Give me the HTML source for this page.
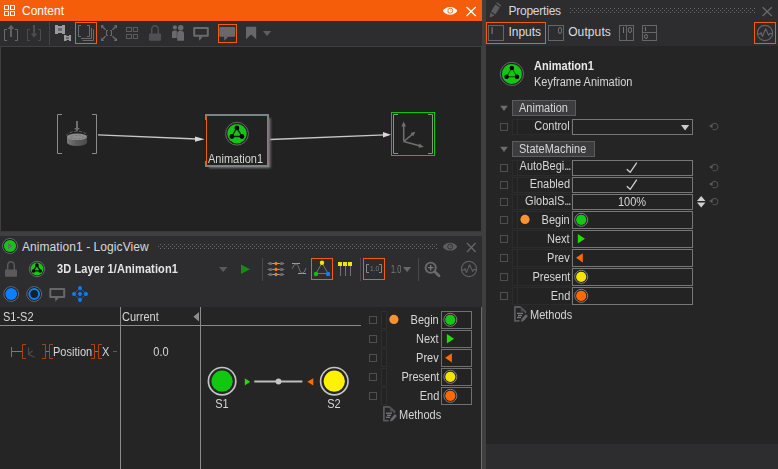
<!DOCTYPE html>
<html><head><meta charset="utf-8"><title>Animation1 - LogicView</title>
<style>
html,body{margin:0;padding:0;}
body{width:778px;height:469px;overflow:hidden;background:#3f3f40;position:relative;font-family:"Liberation Sans",sans-serif;font-size:11px;color:#d6d6d6;}
.t{position:absolute;white-space:nowrap;line-height:14px;height:14px;}
#gfx{position:absolute;left:0;top:0;width:778px;height:469px;}
</style></head><body>
<svg id="gfx" width="778" height="469" viewBox="0 0 778 469">
<rect x="0" y="0" width="778" height="469" fill="#3f3f40"/>
<rect x="0" y="0" width="482" height="21" fill="#f55d0b" />
<rect x="0" y="21" width="482" height="25" fill="#2d2d30" />
<rect x="1" y="47" width="480" height="184" fill="#222222" />
<line x1="0" y1="231.5" x2="482" y2="231.5" stroke="#39393b" stroke-width="1" />
<rect x="0" y="236" width="482" height="71" fill="#2d2d30" />
<rect x="0" y="307" width="481" height="162" fill="#252525" />
<rect x="481" y="307" width="1" height="162" fill="#6c6c6c" />
<rect x="486" y="0" width="292" height="46" fill="#2d2d30" />
<rect x="486" y="46" width="292" height="398" fill="#252525" />
<rect x="486" y="444" width="292" height="25" fill="#2d2d30" />
<rect x="4.5" y="5.5" width="4" height="4" fill="none" stroke="#ffffff" stroke-width="1" />
<rect x="10.5" y="5.5" width="4" height="4" fill="none" stroke="#ffffff" stroke-width="1" />
<rect x="4.5" y="11.5" width="4" height="4" fill="none" stroke="#ffffff" stroke-width="1" />
<rect x="10.5" y="11.5" width="4" height="4" fill="none" stroke="#ffffff" stroke-width="1" />
<path d="M442.90000000000003,10.8 C445.6,5.6000000000000005 454.6,5.6000000000000005 457.3,10.8 C454.6,16.0 445.6,16.0 442.90000000000003,10.8 Z" fill="#ffffff" />
<circle cx="450.3" cy="10.700000000000001" r="2.5" fill="none" stroke="#f55d0b" stroke-width="0.9"/>
<circle cx="450.90000000000003" cy="10.100000000000001" r="0.55" fill="#f55d0b"/>
<path d="M466.5,7 L475.8,16 M475.8,7 L466.5,16" fill="none" stroke="#ffffff" stroke-width="1.3" />
<path d="M7,29.5 L4.5,29.5 L4.5,40.5 L7,40.5" fill="none" stroke="#6a6a6e" stroke-width="1" />
<path d="M15,29.5 L17.5,29.5 L17.5,40.5 L15,40.5" fill="none" stroke="#6a6a6e" stroke-width="1" />
<rect x="10" y="27" width="2" height="10" fill="#626266" />
<path d="M7.6,29 L11,24.8 L14.4,29 Z" fill="#626266" />
<path d="M30,29.5 L27.5,29.5 L27.5,40.5 L30,40.5" fill="none" stroke="#4c4c50" stroke-width="1" />
<path d="M38,29.5 L40.5,29.5 L40.5,40.5 L38,40.5" fill="none" stroke="#4c4c50" stroke-width="1" />
<rect x="33" y="25" width="2" height="10" fill="#4c4c50" />
<path d="M30.6,33.6 L34,37.8 L37.4,33.6 Z" fill="#4c4c50" />
<line x1="49.5" y1="22" x2="49.5" y2="45" stroke="#454548" stroke-width="1" />
<rect x="55" y="25" width="10" height="9" fill="#9a9a9e" />
<rect x="58" y="25" width="4" height="1" fill="#2d2d30" />
<rect x="58" y="33" width="4" height="1" fill="#2d2d30" />
<rect x="58" y="28" width="4" height="3" fill="#68686c" />
<rect x="64" y="35" width="7" height="6" fill="#9a9a9e" />
<rect x="66.5" y="35" width="2.5" height="1" fill="#2d2d30" />
<rect x="66.5" y="40" width="2.5" height="1" fill="#2d2d30" />
<rect x="66" y="37" width="3" height="2" fill="#68686c" />
<rect x="75.5" y="22.5" width="21" height="21" fill="#2d2d30" stroke="#f55d0b" stroke-width="1" />
<path d="M81,25.5 L78.5,25.5 L78.5,36.5 L81,36.5" fill="none" stroke="#6c6c70" stroke-width="1" />
<path d="M87,25.5 L89.5,25.5 L89.5,36.5 L87,36.5" fill="none" stroke="#6c6c70" stroke-width="1" />
<path d="M91.5,28 L91.5,38.5 L81,38.5" fill="none" stroke="#6c6c70" stroke-width="1" />
<path d="M93.5,29.5 L93.5,40.5 L82.5,40.5" fill="none" stroke="#6c6c70" stroke-width="1" />
<path d="M101.5,25.8 L105.5,29.8 M116.5,25.8 L112.5,29.8 M101.5,40.3 L105.5,36.3 M116.5,40.3 L112.5,36.3" fill="none" stroke="#6c6c70" stroke-width="1.3" />
<path d="M101,25.2 L104.2,25.2 L101,28.4 Z M117,25.2 L113.8,25.2 L117,28.4 Z M101,40.9 L104.2,40.9 L101,37.7 Z M117,40.9 L113.8,40.9 L117,37.7 Z" fill="#6c6c70" />
<path d="M108,30.5 L106.5,30.5 L106.5,35.5 L108,35.5 M110,30.5 L111.5,30.5 L111.5,35.5 L110,35.5" fill="none" stroke="#6c6c70" stroke-width="1" />
<rect x="126.5" y="27.5" width="5" height="4" fill="none" stroke="#5c5c60" stroke-width="1" />
<rect x="133.5" y="27.5" width="4" height="4" fill="none" stroke="#5c5c60" stroke-width="1" />
<rect x="126.5" y="34.5" width="5" height="4" fill="none" stroke="#5c5c60" stroke-width="1" />
<rect x="133.5" y="34.5" width="4" height="4" fill="none" stroke="#5c5c60" stroke-width="1" />
<rect x="149" y="33.6" width="12" height="7.2" fill="#505054" rx="0.8"/>
<path d="M151.7,34 L151.7,29.4 A3.3,3.6 0 0 1 158.3,29.4 L158.3,34" fill="none" stroke="#505054" stroke-width="1.5" />
<circle cx="174.9" cy="27.4" r="2.1" fill="#6a6a6e"/>
<path d="M172,37.9 L172,32.4 Q172,30.4 174,30.4 L176.8,30.4 L176.8,37.9 Z" fill="#6a6a6e" />
<circle cx="180.7" cy="27.7" r="2.8" fill="#6a6a6e"/>
<path d="M177.2,40.7 L177.2,33.5 Q177.2,30.8 180.6,30.8 Q184,30.8 184,33.5 L184,40.7 Z" fill="#6a6a6e" />
<path d="M194.2,28.1 L207.8,28.1 L207.8,35.8 L194.2,35.8 Z" fill="none" stroke="#6a6a6e" stroke-width="2" stroke-linejoin="round"/>
<path d="M198.8,36.5 L203,36.5 L199.3,40.7 Z" fill="#6a6a6e" />
<rect x="218.5" y="24.5" width="18" height="18" fill="#2d2d30" stroke="#f55d0b" stroke-width="1" />
<path d="M220.3,27 L234.2,27 Q235.2,27 235.2,28 L235.2,35.8 Q235.2,36.8 234.2,36.8 L220.3,36.8 Q219.3,36.8 219.3,35.8 L219.3,28 Q219.3,27 220.3,27 Z" fill="#69696d" />
<path d="M224,36.5 L228.4,36.5 L224.4,40.7 Z" fill="#69696d" />
<path d="M246,26.7 L256.2,26.7 L256.2,39.2 L251.1,34.6 L246,39.2 Z" fill="#67676b" />
<path d="M263,31 L271.2,31 L267.1,36 Z" fill="#5e5e62" />
<path d="M62,114.5 L57.5,114.5 L57.5,153.5 L62,153.5" fill="none" stroke="#8c8c8c" stroke-width="1" />
<path d="M92,114.5 L96.5,114.5 L96.5,153.5 L92,153.5" fill="none" stroke="#8c8c8c" stroke-width="1" />
<defs><linearGradient id="cyl" x1="0" x2="1" y1="0" y2="0"><stop offset="0" stop-color="#7a7a7a"/><stop offset="0.45" stop-color="#5c5c5c"/><stop offset="1" stop-color="#4a4a4a"/></linearGradient></defs>
<path d="M67,136.8 L67,142.6 A10,3.4 0 0 0 87,142.6 L87,136.8 Z" fill="url(#cyl)" />
<ellipse cx="77" cy="136.8" rx="10" ry="3.3" fill="#8c8c8c"/>
<ellipse cx="77" cy="137.2" rx="6.6" ry="1.7" fill="none" stroke="#6e6e6e" stroke-width="0.8" stroke-dasharray="2.4 1.4"/>
<path d="M66.8,135.8 A10.2,4.5 0 0 1 87.2,135.8" fill="none" stroke="#686868" stroke-width="0.9" stroke-dasharray="3 1.6"/>
<rect x="76" y="121" width="2" height="9" fill="#6e6e6e" />
<path d="M74.2,128 L79.8,128 L77,131.4 Z" fill="#6e6e6e" />
<line x1="98" y1="134.9" x2="197" y2="139.0" stroke="#c8c8c8" stroke-width="1.4" />
<path d="M204.6,139.3 L195,136.6 L195,141.8 Z" fill="#d8d8d8" />
<line x1="270" y1="139.5" x2="385" y2="134.9" stroke="#c8c8c8" stroke-width="1.4" />
<path d="M391,134.7 L383,132.0 L383,137.6 Z" fill="#d8d8d8" />
<defs><filter id="blur" x="-20%" y="-20%" width="140%" height="140%"><feGaussianBlur stdDeviation="1.3"/></filter></defs>
<rect x="209" y="118" width="61.5" height="50" fill="#787878" filter="url(#blur)"/>
<rect x="205" y="114" width="64" height="1" fill="#7c8288" />
<rect x="205" y="166" width="64" height="1" fill="#7c8288" />
<rect x="205" y="114" width="1" height="6" fill="#7c8288" />
<rect x="205" y="161" width="1" height="6" fill="#7c8288" />
<rect x="268" y="114" width="1" height="6" fill="#7c8288" />
<rect x="268" y="161" width="1" height="6" fill="#7c8288" />
<rect x="206.5" y="115.5" width="61" height="50" fill="#222222" stroke="#f0600f" stroke-width="1" />
<circle cx="237" cy="133.7" r="11.4" fill="#1e1e1e" stroke="#68686c" stroke-width="1"/>
<circle cx="237" cy="133.7" r="9.7" fill="#14c614"/>
<path d="M236.90,127.88 L231.86,136.51 L241.95,136.51 Z" fill="#14c614" stroke="#062006" stroke-width="1.3" />
<circle cx="236.9" cy="127.88" r="2.4" fill="#030303"/>
<circle cx="231.86" cy="136.51" r="2.4" fill="#030303"/>
<circle cx="241.95" cy="136.51" r="2.4" fill="#030303"/>
<rect x="391.5" y="112.5" width="43" height="43" fill="none" stroke="#00cc00" stroke-width="1" />
<path d="M398,114.5 L393.5,114.5 L393.5,153.5 L398,153.5" fill="none" stroke="#8c8c8c" stroke-width="1" />
<path d="M428,114.5 L432.5,114.5 L432.5,153.5 L428,153.5" fill="none" stroke="#8c8c8c" stroke-width="1" />
<path d="M403.7,141.5 L403.7,124.5 M403.7,141.5 L413.2,133.6 M403.7,141.5 L420.5,146" fill="none" stroke="#707073" stroke-width="1.5" />
<path d="M403.7,121.6 L401.4,126.6 L406,126.6 Z" fill="#707073" />
<path d="M415.4,131.8 L410.6,133 L413.2,136.2 Z" fill="#707073" />
<path d="M423.8,147 L419.4,143.6 L418.4,147.8 Z" fill="#707073" />
<circle cx="10" cy="246" r="7.5" fill="#1e1e1e" stroke="#68686c" stroke-width="1"/>
<circle cx="10" cy="246" r="6.1" fill="#14c614"/>
<path d="M8,243 L12.5,246 L8,249 Z" fill="#70666f" />
<pattern id="g158_244" x="156" y="244" width="4" height="4" patternUnits="userSpaceOnUse"><rect x="0" y="0" width="1" height="1" fill="#6c6c70"/><rect x="2" y="2" width="1" height="1" fill="#6c6c70"/></pattern>
<rect x="158" y="244" width="279" height="5" fill="url(#g158_244)"/>
<path d="M442.8,246.7 C445.5,241.5 454.5,241.5 457.2,246.7 C454.5,251.89999999999998 445.5,251.89999999999998 442.8,246.7 Z" fill="#5e5e62" />
<circle cx="450.2" cy="246.6" r="2.5" fill="none" stroke="#2d2d30" stroke-width="0.9"/>
<circle cx="450.8" cy="246.0" r="0.55" fill="#2d2d30"/>
<path d="M467,243 L475.6,252 M475.6,243 L467,252" fill="none" stroke="#66666a" stroke-width="1.3" />
<rect x="5" y="269.6" width="12" height="7.2" fill="#5a5a5e" rx="0.8"/>
<path d="M7.7,270 L7.7,265.4 A3.3,3.6 0 0 1 14.3,265.4 L14.3,270" fill="none" stroke="#5a5a5e" stroke-width="1.5" />
<circle cx="37" cy="269" r="7.699999999999999" fill="#1e1e1e" stroke="#68686c" stroke-width="1"/>
<circle cx="37" cy="269" r="6.5" fill="#14c614"/>
<path d="M36.94,265.10 L33.55,270.88 L40.31,270.88 Z" fill="#14c614" stroke="#041804" stroke-width="1.3" />
<circle cx="36.94" cy="265.1" r="1.75" fill="#030303"/>
<circle cx="33.55" cy="270.88" r="1.75" fill="#030303"/>
<circle cx="40.31" cy="270.88" r="1.75" fill="#030303"/>
<path d="M219,267 L227.4,267 L223.2,272 Z" fill="#5a5a5e" />
<path d="M241,264.4 L250,269.2 L241,274 Z" fill="#188a18" />
<line x1="262.5" y1="258" x2="262.5" y2="281" stroke="#48484b" stroke-width="1" />
<line x1="267.8" y1="263.5" x2="284.1" y2="263.5" stroke="#a4a4a8" stroke-width="1" />
<ellipse cx="270.4" cy="263.5" rx="2" ry="1.5" fill="#6c6c70"/>
<ellipse cx="281.6" cy="263.5" rx="2" ry="1.5" fill="#6c6c70"/>
<rect x="274.8" y="261.9" width="2.3" height="3.2" fill="#f47a10" />
<line x1="267.8" y1="269.4" x2="284.1" y2="269.4" stroke="#a4a4a8" stroke-width="1" />
<ellipse cx="270.4" cy="269.4" rx="2" ry="1.5" fill="#6c6c70"/>
<ellipse cx="281.6" cy="269.4" rx="2" ry="1.5" fill="#6c6c70"/>
<rect x="274.8" y="267.79999999999995" width="2.3" height="3.2" fill="#f47a10" />
<line x1="267.8" y1="274.5" x2="284.1" y2="274.5" stroke="#a4a4a8" stroke-width="1" />
<ellipse cx="270.4" cy="274.5" rx="2" ry="1.5" fill="#6c6c70"/>
<ellipse cx="281.6" cy="274.5" rx="2" ry="1.5" fill="#6c6c70"/>
<rect x="274.8" y="272.9" width="2.3" height="3.2" fill="#f47a10" />
<path d="M292,263.5 L300,263.5 M298,273.5 L306.1,273.5" fill="none" stroke="#a0a0a4" stroke-width="1.2" />
<path d="M292.2,268.8 Q294,263.8 296,263.8 C298.6,263.8 299.6,273.3 302.2,273.3 Q304.2,273.3 306,268.2" fill="none" stroke="#727276" stroke-width="1" />
<rect x="311.5" y="258.5" width="21" height="21" fill="#2d2d30" stroke="#f55d0b" stroke-width="1" />
<path d="M322,262.8 L316,273.5 L328,273.5 Z" fill="none" stroke="#727276" stroke-width="1" />
<circle cx="322" cy="262.8" r="2.2" fill="#f5e600"/>
<circle cx="316" cy="274" r="2.2" fill="#10c010"/>
<circle cx="328" cy="274" r="2.2" fill="#0a80ff"/>
<line x1="340.5" y1="266" x2="340.5" y2="276" stroke="#727276" stroke-width="1" />
<rect x="338.0" y="262" width="4" height="4" fill="#f5e600" />
<line x1="345.5" y1="266" x2="345.5" y2="276" stroke="#727276" stroke-width="1" />
<rect x="343.0" y="262" width="4" height="4" fill="#f5e600" />
<line x1="350.5" y1="266" x2="350.5" y2="276" stroke="#727276" stroke-width="1" />
<rect x="348.0" y="262" width="4" height="4" fill="#f5e600" />
<line x1="360.5" y1="258" x2="360.5" y2="281" stroke="#48484b" stroke-width="1" />
<rect x="363.5" y="258.5" width="21" height="21" fill="#2d2d30" stroke="#f55d0b" stroke-width="1" />
<path d="M369,264.5 L366.5,264.5 L366.5,272.5 L369,272.5 M379,264.5 L381.5,264.5 L381.5,272.5 L379,272.5" fill="none" stroke="#88888c" stroke-width="1" />
<path d="M403,267 L411.2,267 L407.1,272 Z" fill="#67676b" />
<line x1="418.5" y1="258" x2="418.5" y2="281" stroke="#48484b" stroke-width="1" />
<circle cx="430.7" cy="267.7" r="5.1" fill="none" stroke="#6a6a6e" stroke-width="1.9"/>
<path d="M428,267.7 L433.4,267.7 M430.7,265 L430.7,270.4" fill="none" stroke="#7a7a7e" stroke-width="1.3" />
<path d="M434.8,271.8 L439,275.8" fill="none" stroke="#6a6a6e" stroke-width="2.8" stroke-linecap="round"/>
<circle cx="469" cy="269" r="7.6" fill="none" stroke="#5e5e62" stroke-width="1.2"/>
<path d="M461.60,269.90 L464.40,269.90 L465.10,268.60 L466.40,272.50 L469.70,264.80 L472.60,271.40 L473.60,269.60 L476.40,269.60" fill="none" stroke="#5e5e62" stroke-width="1.1" stroke-linejoin="round"/>
<circle cx="11.2" cy="294" r="7.4" fill="#1e1e1e" stroke="#68686c" stroke-width="1"/>
<circle cx="11.2" cy="294" r="5.9" fill="#0a80ff"/>
<circle cx="34.2" cy="294" r="7.4" fill="#1e1e1e" stroke="#68686c" stroke-width="1"/>
<circle cx="34.2" cy="294" r="4.9" fill="none" stroke="#0a80ff" stroke-width="2.0"/>
<path d="M50.3,289 L64.2,289 L64.2,297 L50.3,297 Z" fill="none" stroke="#67676b" stroke-width="2" stroke-linejoin="round"/>
<path d="M55,297.6 L59.4,297.6 L55.4,301.6 Z" fill="#67676b" />
<path d="M80,288 L86,294 L80,300 L74,294 Z" fill="none" stroke="#1c5cae" stroke-width="0.9" />
<path d="M74,294 L86,294 M80,288 L80,300" fill="none" stroke="#1a4a88" stroke-width="0.7" />
<circle cx="80" cy="288" r="1.9" fill="#0a80ff"/>
<circle cx="86" cy="294" r="1.9" fill="#0a80ff"/>
<circle cx="80" cy="300" r="1.9" fill="#0a80ff"/>
<circle cx="74" cy="294" r="1.9" fill="#0a80ff"/>
<circle cx="80" cy="294" r="1.9" fill="#0a80ff"/>
<line x1="0" y1="325.5" x2="361" y2="325.5" stroke="#8a8a8a" stroke-width="1" />
<line x1="120.5" y1="307" x2="120.5" y2="469" stroke="#8a8a8a" stroke-width="1" />
<line x1="200.5" y1="307" x2="200.5" y2="469" stroke="#8a8a8a" stroke-width="1" />
<path d="M199,312 L199,321.4 L193.4,316.7 Z" fill="#8c8c8c" />
<path d="M11.5,347 L11.5,357 M11.5,351.5 L22,351.5" fill="none" stroke="#77777a" stroke-width="1" />
<path d="M26,344.5 L22.5,344.5 L22.5,358.5 L26,358.5" fill="none" stroke="#a8450f" stroke-width="1" />
<path d="M42,344.5 L45.5,344.5 L45.5,358.5 L42,358.5" fill="none" stroke="#a8450f" stroke-width="1" />
<path d="M28.6,347.5 L28.6,354.4 L34.6,357.2 M28.6,354.4 L32.6,350.6" fill="none" stroke="#4e4e50" stroke-width="1.1" />
<line x1="46" y1="351.5" x2="49" y2="351.5" stroke="#77777a" stroke-width="1" />
<path d="M53,344.5 L49.5,344.5 L49.5,358.5 L53,358.5" fill="none" stroke="#a8450f" stroke-width="1" />
<path d="M91,344.5 L94.5,344.5 L94.5,358.5 L91,358.5" fill="none" stroke="#a8450f" stroke-width="1" />
<line x1="95" y1="351.5" x2="98" y2="351.5" stroke="#77777a" stroke-width="1" />
<path d="M102,344.5 L98.5,344.5 L98.5,358.5 L102,358.5" fill="none" stroke="#a8450f" stroke-width="1" />
<line x1="113" y1="351.5" x2="117" y2="351.5" stroke="#5a5a5c" stroke-width="1" />
<circle cx="222.1" cy="381.2" r="13.7" fill="#252525" stroke="#c4c4c4" stroke-width="1.7"/>
<circle cx="222.1" cy="381.2" r="10.6" fill="#0fc80f"/>
<circle cx="334.3" cy="381.2" r="13.7" fill="#252525" stroke="#c4c4c4" stroke-width="1.7"/>
<circle cx="334.3" cy="381.2" r="10.6" fill="#fff200"/>
<path d="M244.8,378.2 L250.2,381.8 L244.8,385.4 Z" fill="#22dd00" />
<line x1="254.3" y1="381.5" x2="302.4" y2="381.5" stroke="#bebebe" stroke-width="2" />
<circle cx="278.5" cy="381.5" r="2.9" fill="#c6c6c6"/>
<path d="M313.3,378.2 L307.3,381.8 L313.3,385.4 Z" fill="#ff6a00" />
<rect x="369.5" y="316.5" width="7" height="7" fill="none" stroke="#4e4e4e" stroke-width="1" />
<rect x="381.5" y="311.5" width="5" height="17" fill="#232323" stroke="#2e2e2e" stroke-width="1" />
<rect x="441.5" y="311.5" width="30" height="17" fill="#232323" stroke="#707070" stroke-width="1" />
<circle cx="450.3" cy="319.8" r="6.5" fill="#1e1e1e" stroke="#8a8a8a" stroke-width="0.9"/>
<circle cx="450.3" cy="319.8" r="5.1" fill="#14c814"/>
<circle cx="393.9" cy="319.4" r="4.6" fill="#ff922e"/>
<rect x="369.5" y="335.5" width="7" height="7" fill="none" stroke="#4e4e4e" stroke-width="1" />
<rect x="381.5" y="330.5" width="5" height="17" fill="#232323" stroke="#2e2e2e" stroke-width="1" />
<rect x="441.5" y="330.5" width="30" height="17" fill="#232323" stroke="#707070" stroke-width="1" />
<path d="M446.90000000000003,334.0 L454.1,338.8 L446.90000000000003,343.6 Z" fill="#22dd00" />
<rect x="369.5" y="354.5" width="7" height="7" fill="none" stroke="#4e4e4e" stroke-width="1" />
<rect x="381.5" y="349.5" width="5" height="17" fill="#232323" stroke="#2e2e2e" stroke-width="1" />
<rect x="441.5" y="349.5" width="30" height="17" fill="#232323" stroke="#707070" stroke-width="1" />
<path d="M451.90000000000003,353.2 L445.1,357.8 L451.90000000000003,362.4 Z" fill="#ff6a00" />
<rect x="369.5" y="373.5" width="7" height="7" fill="none" stroke="#4e4e4e" stroke-width="1" />
<rect x="381.5" y="368.5" width="5" height="17" fill="#232323" stroke="#2e2e2e" stroke-width="1" />
<rect x="441.5" y="368.5" width="30" height="17" fill="#232323" stroke="#707070" stroke-width="1" />
<circle cx="450.3" cy="376.8" r="6.5" fill="#1e1e1e" stroke="#8a8a8a" stroke-width="0.9"/>
<circle cx="450.3" cy="376.8" r="5.1" fill="#f2e400"/>
<rect x="369.5" y="392.5" width="7" height="7" fill="none" stroke="#4e4e4e" stroke-width="1" />
<rect x="381.5" y="387.5" width="5" height="17" fill="#232323" stroke="#2e2e2e" stroke-width="1" />
<rect x="441.5" y="387.5" width="30" height="17" fill="#232323" stroke="#707070" stroke-width="1" />
<circle cx="450.3" cy="395.8" r="6.5" fill="#1e1e1e" stroke="#8a8a8a" stroke-width="0.9"/>
<circle cx="450.3" cy="395.8" r="5.1" fill="#ff6a00"/>
<path d="M389.6,406.8 L383.9,406.8 L383.9,420.70000000000005 L388.6,420.70000000000005" fill="none" stroke="#59595d" stroke-width="1.8" stroke-linejoin="round"/>
<path d="M389.4,406.8 L394.4,411.40000000000003 L394.4,413.0" fill="none" stroke="#59595d" stroke-width="1.6" stroke-linejoin="round"/>
<path d="M389.8,407.40000000000003 L393.8,411.40000000000003 L389.8,411.40000000000003 Z" fill="#4a4a4d" />
<line x1="386" y1="413.20000000000005" x2="392" y2="413.20000000000005" stroke="#7a7a7e" stroke-width="1.3" />
<line x1="387" y1="415.3" x2="391" y2="415.3" stroke="#7a7a7e" stroke-width="1.3" />
<line x1="386" y1="417.3" x2="390" y2="417.3" stroke="#7a7a7e" stroke-width="1.3" />
<line x1="395.9" y1="415.0" x2="391.6" y2="419.8" stroke="#69696d" stroke-width="2.7" />
<path d="M390.5,418.90000000000003 L392.6,420.8 L389.9,421.6 Z" fill="#69696d" />
<path d="M489.6,17.6 L490.4,12.6 L494.6,15.6 Z" fill="#5c5c60" />
<path d="M491,11.4 L495.4,4.6 L499.8,7.6 L495.4,14.4 Z" fill="#5c5c60" />
<path d="M496.2,3.4 L497,2.2 L501.2,5.2 L500.4,6.4 Z" fill="#5c5c60" />
<pattern id="g570_8" x="570" y="8" width="4" height="4" patternUnits="userSpaceOnUse"><rect x="0" y="0" width="1" height="1" fill="#6c6c70"/><rect x="2" y="2" width="1" height="1" fill="#6c6c70"/></pattern>
<rect x="570" y="8" width="186" height="5" fill="url(#g570_8)"/>
<path d="M762.6,7.2 L771.8,16 M771.8,7.2 L762.6,16" fill="none" stroke="#6a6a6e" stroke-width="1.3" />
<rect x="486.5" y="22.5" width="59" height="21" fill="#2d2d30" stroke="#f55d0b" stroke-width="1" />
<rect x="488.5" y="25.5" width="15" height="15" fill="none" stroke="#66666a" stroke-width="1" />
<rect x="491.5" y="27" width="1.2" height="7" fill="#77777b" />
<rect x="548.5" y="25.5" width="15" height="15" fill="none" stroke="#66666a" stroke-width="1" />
<rect x="558.5" y="27.5" width="3" height="6" fill="none" stroke="#77777b" stroke-width="1" rx="1.7"/>
<rect x="619.5" y="25.5" width="14" height="15" fill="none" stroke="#66666a" stroke-width="1" />
<line x1="626.5" y1="25" x2="626.5" y2="41" stroke="#66666a" stroke-width="1" />
<rect x="623" y="27" width="1" height="6" fill="#77777b" />
<rect x="628.5" y="27.5" width="3" height="5" fill="none" stroke="#77777b" stroke-width="1" rx="1.7"/>
<rect x="642.5" y="25.5" width="14" height="15" fill="none" stroke="#66666a" stroke-width="1" />
<line x1="642" y1="32.5" x2="657" y2="32.5" stroke="#66666a" stroke-width="1" />
<rect x="645" y="27" width="1" height="4" fill="#77777b" />
<rect x="644.5" y="34.5" width="3" height="4" fill="none" stroke="#77777b" stroke-width="1" rx="1.7"/>
<rect x="754.5" y="22.5" width="21" height="21" fill="#2d2d30" stroke="#f55d0b" stroke-width="1" />
<circle cx="765" cy="33" r="7.6" fill="none" stroke="#66666a" stroke-width="1.2"/>
<path d="M757.60,33.90 L760.40,33.90 L761.10,32.60 L762.40,36.50 L765.70,28.80 L768.60,35.40 L769.60,33.60 L772.40,33.60" fill="none" stroke="#66666a" stroke-width="1.1" stroke-linejoin="round"/>
<circle cx="511.9" cy="73.9" r="11.6" fill="#1e1e1e" stroke="#68686c" stroke-width="1"/>
<circle cx="511.9" cy="73.9" r="10" fill="#14c614"/>
<path d="M511.80,67.90 L506.60,76.80 L517.00,76.80 Z" fill="#14c614" stroke="#0c3a0c" stroke-width="0.9" />
<circle cx="511.8" cy="67.9" r="2.25" fill="#030303"/>
<circle cx="506.6" cy="76.8" r="2.25" fill="#030303"/>
<circle cx="517.0" cy="76.8" r="2.25" fill="#030303"/>
<path d="M500.2,105.8 L507.8,105.8 L504,111 Z" fill="#6c6c6c" />
<rect x="512.5" y="100.5" width="63" height="15" fill="#3d3d3f" stroke="#5c5c5c" stroke-width="1" />
<path d="M500.2,146.8 L507.8,146.8 L504,152 Z" fill="#6c6c6c" />
<rect x="512.5" y="141.5" width="82" height="15" fill="#3d3d3f" stroke="#5c5c5c" stroke-width="1" />
<rect x="500.5" y="123.5" width="7" height="7" fill="none" stroke="#4e4e4e" stroke-width="1" />
<rect x="512.5" y="119.5" width="59" height="15" fill="#232323" stroke="#2b2b2b" stroke-width="1" />
<line x1="517.5" y1="119" x2="517.5" y2="135" stroke="#2d2d2d" stroke-width="1" />
<rect x="572.5" y="119.5" width="120" height="15" fill="#232323" stroke="#777777" stroke-width="1" />
<path d="M711.50,126.60 A3.2,3.2 0 1 1 712.64,129.05" fill="none" stroke="#505053" stroke-width="1.1" />
<path d="M709.00,126.10 L712.60,124.10 L712.50,128.30 Z" fill="#5a5a5d" />
<path d="M681,125 L689.2,125 L685.1,130.4 Z" fill="#cccccc" />
<rect x="500.5" y="164.5" width="7" height="7" fill="none" stroke="#4e4e4e" stroke-width="1" />
<rect x="512.5" y="160.5" width="59" height="15" fill="#232323" stroke="#2b2b2b" stroke-width="1" />
<line x1="517.5" y1="160" x2="517.5" y2="176" stroke="#2d2d2d" stroke-width="1" />
<rect x="572.5" y="160.5" width="120" height="15" fill="#232323" stroke="#777777" stroke-width="1" />
<path d="M711.50,167.60 A3.2,3.2 0 1 1 712.64,170.05" fill="none" stroke="#505053" stroke-width="1.1" />
<path d="M709.00,167.10 L712.60,165.10 L712.50,169.30 Z" fill="#5a5a5d" />
<rect x="500.5" y="181.5" width="7" height="7" fill="none" stroke="#4e4e4e" stroke-width="1" />
<rect x="512.5" y="177.5" width="59" height="15" fill="#232323" stroke="#2b2b2b" stroke-width="1" />
<line x1="517.5" y1="177" x2="517.5" y2="193" stroke="#2d2d2d" stroke-width="1" />
<rect x="572.5" y="177.5" width="120" height="15" fill="#232323" stroke="#777777" stroke-width="1" />
<path d="M711.50,184.60 A3.2,3.2 0 1 1 712.64,187.05" fill="none" stroke="#505053" stroke-width="1.1" />
<path d="M709.00,184.10 L712.60,182.10 L712.50,186.30 Z" fill="#5a5a5d" />
<rect x="500.5" y="198.5" width="7" height="7" fill="none" stroke="#4e4e4e" stroke-width="1" />
<rect x="512.5" y="194.5" width="59" height="15" fill="#232323" stroke="#2b2b2b" stroke-width="1" />
<line x1="517.5" y1="194" x2="517.5" y2="210" stroke="#2d2d2d" stroke-width="1" />
<rect x="572.5" y="194.5" width="120" height="15" fill="#232323" stroke="#777777" stroke-width="1" />
<path d="M711.50,201.60 A3.2,3.2 0 1 1 712.64,204.05" fill="none" stroke="#505053" stroke-width="1.1" />
<path d="M709.00,201.10 L712.60,199.10 L712.50,203.30 Z" fill="#5a5a5d" />
<path d="M626.8,169.3 L630.2,172.3 L636.8,162.6" fill="none" stroke="#d2d2d2" stroke-width="1.3" />
<path d="M626.8,186.3 L630.2,189.3 L636.8,179.6" fill="none" stroke="#d2d2d2" stroke-width="1.3" />
<path d="M697,201 L705.4,201 L701.2,196 Z" fill="#d0d0d0" />
<path d="M697,202.4 L705.4,202.4 L701.2,207.4 Z" fill="#d0d0d0" />
<rect x="500.5" y="216.5" width="7" height="7" fill="none" stroke="#4e4e4e" stroke-width="1" />
<rect x="512.5" y="211.5" width="59" height="17" fill="#232323" stroke="#2b2b2b" stroke-width="1" />
<line x1="517.5" y1="211" x2="517.5" y2="229" stroke="#2d2d2d" stroke-width="1" />
<rect x="572.5" y="211.5" width="120" height="17" fill="#232323" stroke="#777777" stroke-width="1" />
<circle cx="581.2" cy="219.8" r="6.5" fill="#1e1e1e" stroke="#8a8a8a" stroke-width="0.9"/>
<circle cx="581.2" cy="219.8" r="5.1" fill="#14c814"/>
<circle cx="525" cy="219.4" r="4.6" fill="#ff922e"/>
<rect x="500.5" y="235.5" width="7" height="7" fill="none" stroke="#4e4e4e" stroke-width="1" />
<rect x="512.5" y="230.5" width="59" height="17" fill="#232323" stroke="#2b2b2b" stroke-width="1" />
<line x1="517.5" y1="230" x2="517.5" y2="248" stroke="#2d2d2d" stroke-width="1" />
<rect x="572.5" y="230.5" width="120" height="17" fill="#232323" stroke="#777777" stroke-width="1" />
<path d="M577.8000000000001,234 L585.0,238.8 L577.8000000000001,243.6 Z" fill="#22dd00" />
<rect x="500.5" y="254.5" width="7" height="7" fill="none" stroke="#4e4e4e" stroke-width="1" />
<rect x="512.5" y="249.5" width="59" height="17" fill="#232323" stroke="#2b2b2b" stroke-width="1" />
<line x1="517.5" y1="249" x2="517.5" y2="267" stroke="#2d2d2d" stroke-width="1" />
<rect x="572.5" y="249.5" width="120" height="17" fill="#232323" stroke="#777777" stroke-width="1" />
<path d="M582.8000000000001,253.2 L576.0,257.8 L582.8000000000001,262.4 Z" fill="#ff6a00" />
<rect x="500.5" y="273.5" width="7" height="7" fill="none" stroke="#4e4e4e" stroke-width="1" />
<rect x="512.5" y="268.5" width="59" height="17" fill="#232323" stroke="#2b2b2b" stroke-width="1" />
<line x1="517.5" y1="268" x2="517.5" y2="286" stroke="#2d2d2d" stroke-width="1" />
<rect x="572.5" y="268.5" width="120" height="17" fill="#232323" stroke="#777777" stroke-width="1" />
<circle cx="581.2" cy="276.8" r="6.5" fill="#1e1e1e" stroke="#8a8a8a" stroke-width="0.9"/>
<circle cx="581.2" cy="276.8" r="5.1" fill="#f2e400"/>
<rect x="500.5" y="292.5" width="7" height="7" fill="none" stroke="#4e4e4e" stroke-width="1" />
<rect x="512.5" y="287.5" width="59" height="17" fill="#232323" stroke="#2b2b2b" stroke-width="1" />
<line x1="517.5" y1="287" x2="517.5" y2="305" stroke="#2d2d2d" stroke-width="1" />
<rect x="572.5" y="287.5" width="120" height="17" fill="#232323" stroke="#777777" stroke-width="1" />
<circle cx="581.2" cy="295.8" r="6.5" fill="#1e1e1e" stroke="#8a8a8a" stroke-width="0.9"/>
<circle cx="581.2" cy="295.8" r="5.1" fill="#ff6a00"/>
<path d="M520.6,307.0 L514.9,307.0 L514.9,320.90000000000003 L519.6,320.90000000000003" fill="none" stroke="#59595d" stroke-width="1.8" stroke-linejoin="round"/>
<path d="M520.4,307.0 L525.4,311.6 L525.4,313.2" fill="none" stroke="#59595d" stroke-width="1.6" stroke-linejoin="round"/>
<path d="M520.8,307.6 L524.8,311.6 L520.8,311.6 Z" fill="#4a4a4d" />
<line x1="517" y1="313.40000000000003" x2="523" y2="313.40000000000003" stroke="#7a7a7e" stroke-width="1.3" />
<line x1="518" y1="315.5" x2="522" y2="315.5" stroke="#7a7a7e" stroke-width="1.3" />
<line x1="517" y1="317.5" x2="521" y2="317.5" stroke="#7a7a7e" stroke-width="1.3" />
<line x1="526.9" y1="315.2" x2="522.6" y2="320.0" stroke="#69696d" stroke-width="2.7" />
<path d="M521.5,319.1 L523.6,321.0 L520.9,321.8 Z" fill="#69696d" />
</svg>
<div class="t" style="top:4px;font-size:12px;color:#ffffff;left:22px;">Content</div>
<div class="t" style="top:152px;font-size:12px;color:#d6d6d6;left:208px;transform:scaleX(0.917);transform-origin:left center;">Animation1</div>
<div class="t" style="top:240px;font-size:12px;color:#d8d8d8;letter-spacing:0.07px;left:22px;">Animation1 - LogicView</div>
<div class="t" style="top:262px;font-size:12px;color:#e4e4e4;font-weight:bold;letter-spacing:0.12px;left:57.3px;transform:scaleX(0.917);transform-origin:left center;">3D Layer 1/Animation1</div>
<div class="t" style="top:262.17px;font-size:7px;color:#7c7c80;left:370px;transform:scaleX(0.94);transform-origin:left center;">1.0</div>
<div class="t" style="top:261.96px;font-size:10.5px;color:#7c7c80;left:391px;transform:scaleX(0.7);transform-origin:left center;">1.0</div>
<div class="t" style="top:310px;font-size:12px;color:#d6d6d6;left:3px;transform:scaleX(0.917);transform-origin:left center;">S1-S2</div>
<div class="t" style="top:310px;font-size:12px;color:#d6d6d6;left:122px;transform:scaleX(0.917);transform-origin:left center;">Current</div>
<div class="t" style="top:345px;font-size:12px;color:#d6d6d6;left:52.6px;transform:scaleX(0.917);transform-origin:left center;">Position</div>
<div class="t" style="top:345px;font-size:12px;color:#d6d6d6;left:101.5px;transform:scaleX(0.917);transform-origin:left center;">X</div>
<div class="t" style="top:345px;font-size:12px;color:#d6d6d6;left:110.5px;width:100px;text-align:center;transform:scaleX(0.917);transform-origin:center center;">0.0</div>
<div class="t" style="top:397px;font-size:12px;color:#d6d6d6;left:171.6px;width:100px;text-align:center;transform:scaleX(0.917);transform-origin:center center;">S1</div>
<div class="t" style="top:397px;font-size:12px;color:#d6d6d6;left:283.8px;width:100px;text-align:center;transform:scaleX(0.917);transform-origin:center center;">S2</div>
<div class="t" style="top:313px;font-size:12px;color:#d6d6d6;right:339px;text-align:right;transform:scaleX(0.917);transform-origin:right center;">Begin</div>
<div class="t" style="top:332px;font-size:12px;color:#d6d6d6;right:339px;text-align:right;transform:scaleX(0.917);transform-origin:right center;">Next</div>
<div class="t" style="top:351px;font-size:12px;color:#d6d6d6;right:339px;text-align:right;transform:scaleX(0.917);transform-origin:right center;">Prev</div>
<div class="t" style="top:370px;font-size:12px;color:#d6d6d6;right:339px;text-align:right;transform:scaleX(0.917);transform-origin:right center;">Present</div>
<div class="t" style="top:389px;font-size:12px;color:#d6d6d6;right:339px;text-align:right;transform:scaleX(0.917);transform-origin:right center;">End</div>
<div class="t" style="top:408px;font-size:12px;color:#d6d6d6;left:398.9px;transform:scaleX(0.917);transform-origin:left center;">Methods</div>
<div class="t" style="top:4px;font-size:12px;color:#d8d8d8;letter-spacing:-0.22px;left:508.4px;">Properties</div>
<div class="t" style="top:25px;font-size:12px;color:#dedede;left:508.4px;">Inputs</div>
<div class="t" style="top:25px;font-size:12px;color:#dedede;letter-spacing:0.1px;left:568.2px;">Outputs</div>
<div class="t" style="top:59px;font-size:12px;color:#e8e8e8;font-weight:bold;left:534.4px;transform:scaleX(0.917);transform-origin:left center;">Animation1</div>
<div class="t" style="top:75px;font-size:12px;color:#d6d6d6;left:534.4px;transform:scaleX(0.917);transform-origin:left center;">Keyframe Animation</div>
<div class="t" style="top:101px;font-size:12px;color:#d6d6d6;left:519px;transform:scaleX(0.917);transform-origin:left center;">Animation</div>
<div class="t" style="top:142px;font-size:12px;color:#d6d6d6;left:519px;transform:scaleX(0.917);transform-origin:left center;">StateMachine</div>
<div class="t" style="top:119px;font-size:12px;color:#d6d6d6;right:207.9px;text-align:right;transform:scaleX(0.917);transform-origin:right center;">Control</div>
<div class="t" style="top:159px;font-size:12px;color:#d6d6d6;right:207.9px;text-align:right;transform:scaleX(0.917);transform-origin:right center;">AutoBegi<span style="letter-spacing:-1.2px">...</span></div>
<div class="t" style="top:177px;font-size:12px;color:#d6d6d6;right:207.9px;text-align:right;transform:scaleX(0.917);transform-origin:right center;">Enabled</div>
<div class="t" style="top:194px;font-size:12px;color:#d6d6d6;right:207.9px;text-align:right;transform:scaleX(0.917);transform-origin:right center;">GlobalS<span style="letter-spacing:-1.2px">...</span></div>
<div class="t" style="top:195px;font-size:12px;color:#d6d6d6;left:582px;width:100px;text-align:center;transform:scaleX(0.917);transform-origin:center center;">100%</div>
<div class="t" style="top:213px;font-size:12px;color:#d6d6d6;right:207.9px;text-align:right;transform:scaleX(0.917);transform-origin:right center;">Begin</div>
<div class="t" style="top:232px;font-size:12px;color:#d6d6d6;right:207.9px;text-align:right;transform:scaleX(0.917);transform-origin:right center;">Next</div>
<div class="t" style="top:251px;font-size:12px;color:#d6d6d6;right:207.9px;text-align:right;transform:scaleX(0.917);transform-origin:right center;">Prev</div>
<div class="t" style="top:270px;font-size:12px;color:#d6d6d6;right:207.9px;text-align:right;transform:scaleX(0.917);transform-origin:right center;">Present</div>
<div class="t" style="top:289px;font-size:12px;color:#d6d6d6;right:207.9px;text-align:right;transform:scaleX(0.917);transform-origin:right center;">End</div>
<div class="t" style="top:308px;font-size:12px;color:#d6d6d6;left:529.8px;transform:scaleX(0.917);transform-origin:left center;">Methods</div>
</body></html>
